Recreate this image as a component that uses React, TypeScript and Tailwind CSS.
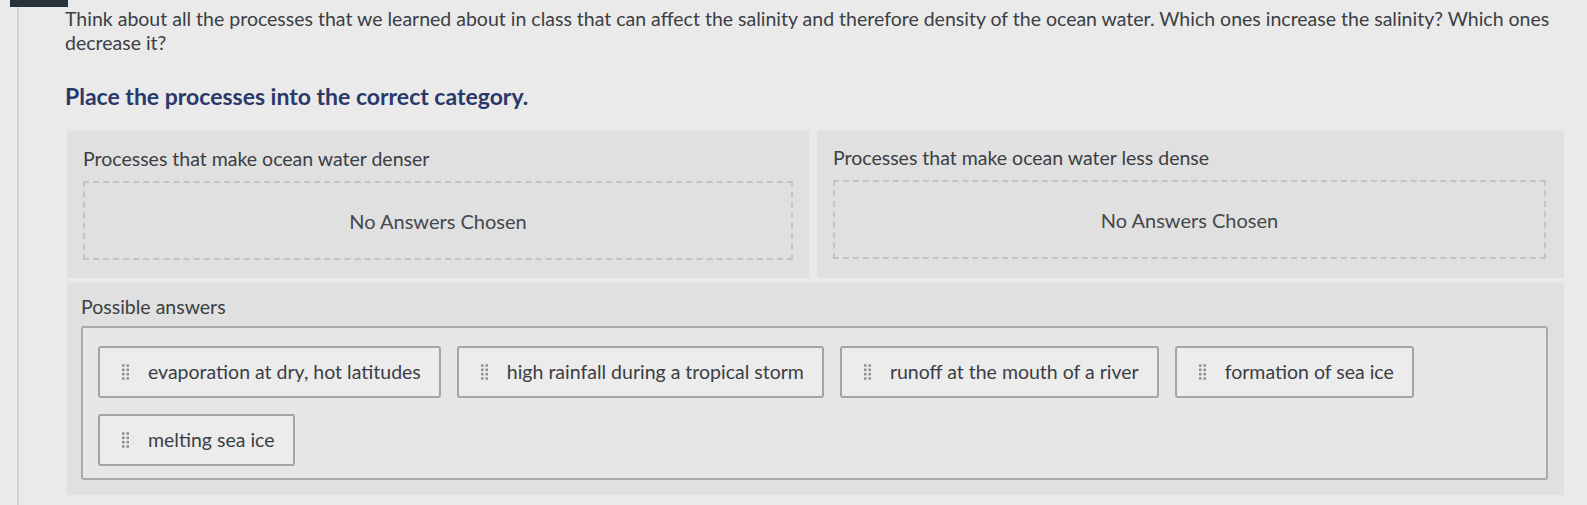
import React from 'react';

const answers = [
  'evaporation at dry, hot latitudes',
  'high rainfall during a tropical storm',
  'runoff at the mouth of a river',
  'formation of sea ice',
  'melting sea ice',
];

const DragHandle = () => (
  <svg width="7" height="17" viewBox="0 0 7 17" className="shrink-0">
    {[1.5, 5.8, 10.1, 14.4].map((y) => (
      <g key={y} fill="#8d8f92">
        <rect x="0" y={y - 1.2} width="2.5" height="2.5" />
        <rect x="4.5" y={y - 1.2} width="2.5" height="2.5" />
      </g>
    ))}
  </svg>
);

const Category = ({ title, className }: { title: string; className: string }) => (
  <div className={`bg-[#dfe0df] ${className}`}>
    <h3 className="text-[19.5px] leading-[24px] mb-[10px]">{title}</h3>
    <div className="h-[79px] border-2 border-dashed border-[#c3c5c4] flex items-center justify-center text-[20px] text-[#45484d]">
      No Answers Chosen
    </div>
  </div>
);

export default function App() {
  return (
    <div className="w-[1587px] h-[505px] overflow-hidden bg-[#e9eae9] text-[#3b3e44] font-['Lato','Liberation_Sans',sans-serif] flex flex-col">
      <div className="w-[58px] h-[7px] ml-[10px] bg-[#27323b] shrink-0" />
      <div className="flex-1 ml-[17px] border-l-2 border-[#d2d3d2] pl-[46px] pr-[23px]">
        <p className="text-[19.5px] leading-[24px] w-[1505px]">
          Think about all the processes that we learned about in class that can affect the salinity and therefore density of the ocean water. Which ones increase the salinity? Which ones decrease it?
        </p>
        <h2 className="mt-[27px] text-[23px] leading-[28px] font-bold text-[#2b386a]">
          Place the processes into the correct category.
        </h2>

        <div className="mt-[21px] ml-[2px] flex gap-[8px]">
          <Category title="Processes that make ocean water denser" className="w-[742px] pt-[16px] pb-[17px] pl-[16px] pr-[16px]" />
          <Category title="Processes that make ocean water less dense" className="flex-1 pt-[15px] pb-[19px] pl-[16px] pr-[18px]" />
        </div>

        <div className="mt-[5px] ml-[2px] bg-[#dfe0df] pt-[12px] pl-[14px] pr-[16px] pb-[15px]">
          <h3 className="text-[19.5px] leading-[24px] mb-[7px]">Possible answers</h3>
          <div className="border-2 border-[#a9abaa] rounded-[3px] bg-[#e6e7e6] pt-[18px] pb-[14px] px-[15px] h-[154px]">
            <div className="flex flex-wrap gap-[16px]">
              {answers.map((a) => (
                <div
                  key={a}
                  className="h-[52px] flex items-center gap-[19px] pl-[22px] pr-[18px] border-2 border-[#a3a5a4] rounded-[3px] bg-[#ebeceb] text-[19.5px] text-[#3b3e44]"
                >
                  <DragHandle />
                  <span>{a}</span>
                </div>
              ))}
            </div>
          </div>
        </div>
      </div>
    </div>
  );
}
